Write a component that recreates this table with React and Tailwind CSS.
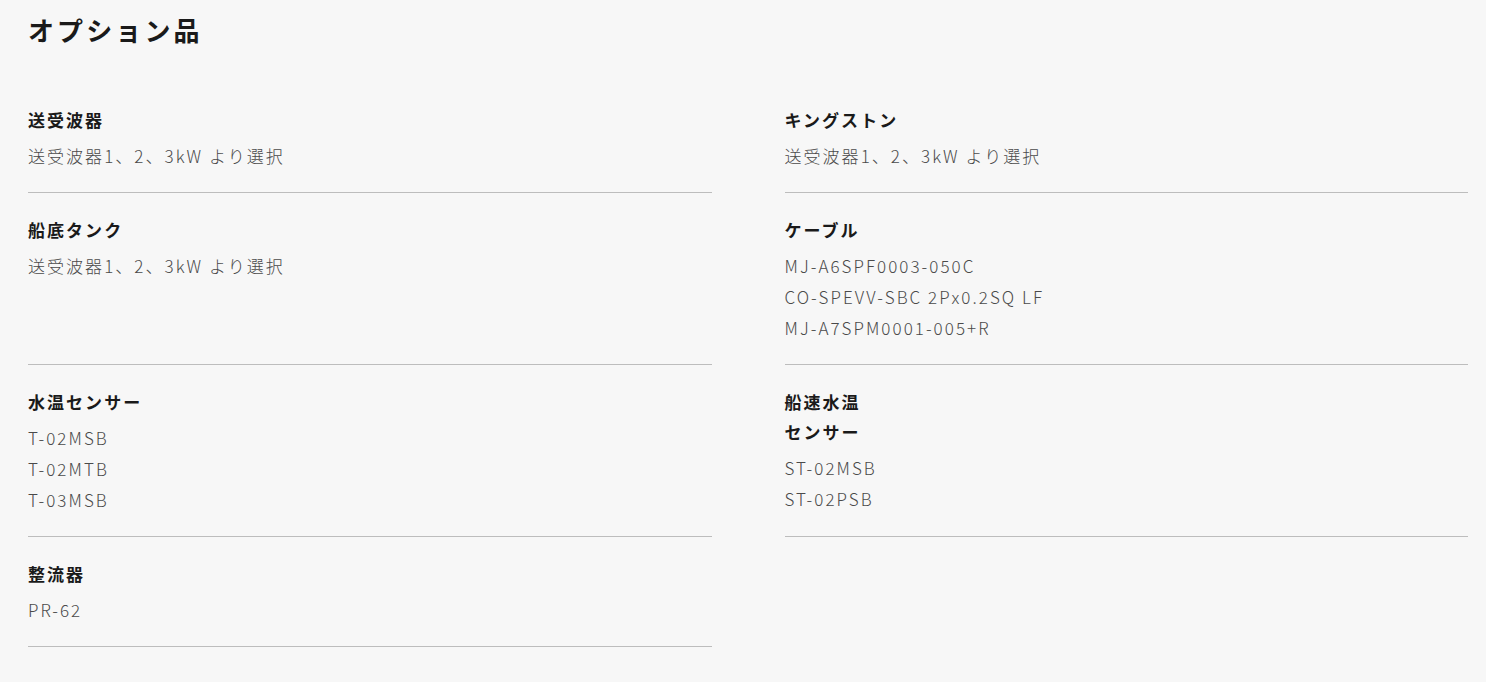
const items = [
  { title: ["送受波器"], lines: ["送受波器1、2、3kW より選択"] },
  { title: ["キングストン"], lines: ["送受波器1、2、3kW より選択"] },
  { title: ["船底タンク"], lines: ["送受波器1、2、3kW より選択"] },
  {
    title: ["ケーブル"],
    lines: ["MJ-A6SPF0003-050C", "CO-SPEVV-SBC 2Px0.2SQ LF", "MJ-A7SPM0001-005+R"],
  },
  { title: ["水温センサー"], lines: ["T-02MSB", "T-02MTB", "T-03MSB"] },
  { title: ["船速水温", "センサー"], lines: ["ST-02MSB", "ST-02PSB"] },
  { title: ["整流器"], lines: ["PR-62"] },
];

export default function App() {
  return (
    <div
      className="min-h-screen bg-[#f7f7f7] pt-[10px]"
      style={{ fontFamily: '"Noto Sans CJK JP", "Noto Sans", sans-serif' }}
    >
      <div className="w-[1468px] pl-[28px]">
        <h2 className="text-[26px] leading-[40px] font-bold tracking-[0.12em] text-[#1a1a1a] mb-[33px]">
          オプション品
        </h2>

        {/* オプション一覧 */}
        <div className="grid grid-cols-2 gap-x-[73px]">
          {items.map((item, i) => (
            <div key={i} className="border-b border-[#bdbdbd] pt-[22px] pb-[21px]">
              <h3 className="text-[17px] leading-[30px] font-bold tracking-[0.12em] text-[#1a1a1a]">
                {item.title.map((t, j) => (
                  <div key={j}>{t}</div>
                ))}
              </h3>
              <div
                className="mt-[5px] text-[17px] leading-[31px] font-light tracking-[0.12em] text-[#4a4a4a]"
                style={{ fontFamily: '"Noto Sans CJK JP Light", "Noto Sans CJK JP", sans-serif' }}
              >
                {item.lines.map((l, j) => (
                  <p key={j}>{l}</p>
                ))}
              </div>
            </div>
          ))}
        </div>
      </div>
    </div>
  );
}
